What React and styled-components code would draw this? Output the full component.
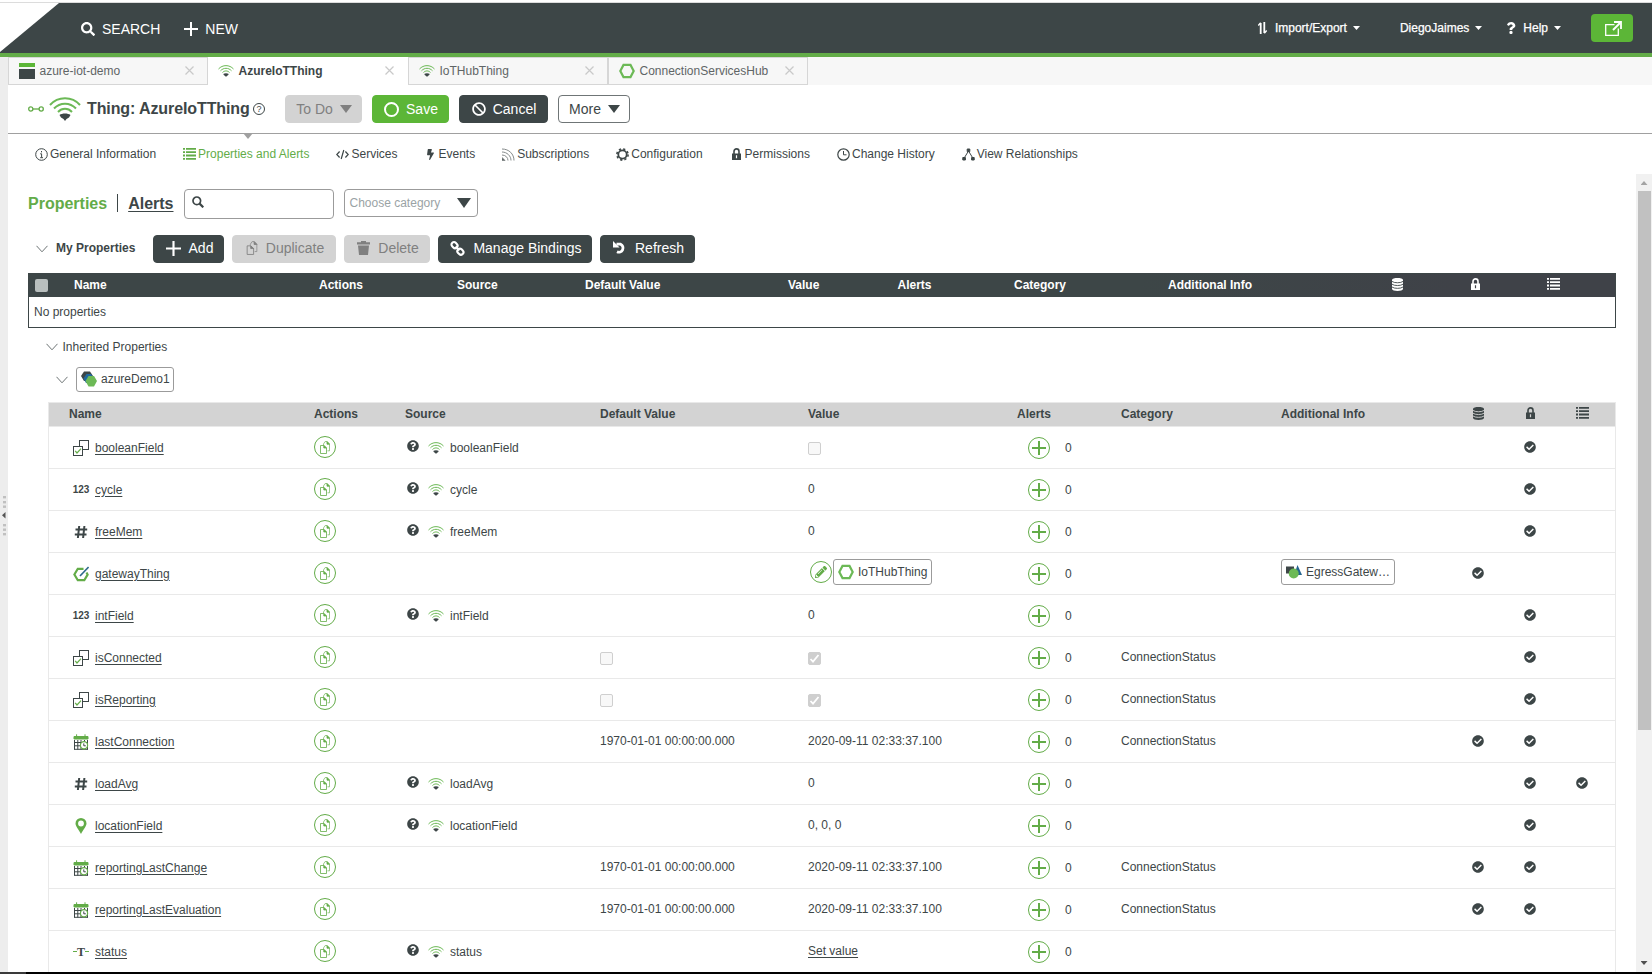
import styled, { createGlobalStyle } from 'styled-components';
import { FaBan, FaBolt, FaCheckCircle, FaPencilAlt, FaQuestion, FaQuestionCircle, FaSearch } from 'react-icons/fa';

const COLORS = {
  DARK: '#3d4647',
  GREEN: '#5cb637',
  GREEN_LINE: '#63ac48',
  ICON_GREEN: '#6cb956',
  GRAY: '#d3d3d3',
  GRAY_TEXT: '#808080',
  BORDER: '#9b9b9b',
  LINE: '#e9e9e9',
  WHITE: '#ffffff',
};

const WIFI_TABS = ['AzureIoTThing', 'IoTHubThing'];

const SUB_NAV = [
  { label: 'General Information', icon: 'info', space: 27 },
  { label: 'Properties and Alerts', icon: 'list', space: 27, active: true },
  { label: 'Services', icon: 'code', space: 28 },
  { label: 'Events', icon: 'bolt', space: 27 },
  { label: 'Subscriptions', icon: 'feed', space: 27 },
  { label: 'Configuration', icon: 'gear', space: 29 },
  { label: 'Permissions', icon: 'lock', space: 27 },
  { label: 'Change History', icon: 'clock', space: 27 },
  { label: 'View Relationships', icon: 'tree', space: 0 },
];

const ROWS = [
  { name: 'booleanField', type: 'bool', source: true, value: 'unchecked', readOnly: true },
  { name: 'cycle', type: 'int', source: true, value: '0', readOnly: true },
  { name: 'freeMem', type: 'number', source: true, value: '0', readOnly: true },
  { name: 'gatewayThing', type: 'thing', value: 'thing', info: 'EgressGatew…', persistent: true },
  { name: 'intField', type: 'int', source: true, value: '0', readOnly: true },
  { name: 'isConnected', type: 'bool', def: 'unchecked', value: 'checked', category: 'ConnectionStatus', readOnly: true },
  { name: 'isReporting', type: 'bool', def: 'unchecked', value: 'checked', category: 'ConnectionStatus', readOnly: true },
  { name: 'lastConnection', type: 'date', def: '1970-01-01 00:00:00.000', value: '2020-09-11 02:33:37.100', category: 'ConnectionStatus', persistent: true, readOnly: true },
  { name: 'loadAvg', type: 'number', source: true, value: '0', readOnly: true, logged: true },
  { name: 'locationField', type: 'location', source: true, value: '0, 0, 0', readOnly: true },
  { name: 'reportingLastChange', type: 'date', def: '1970-01-01 00:00:00.000', value: '2020-09-11 02:33:37.100', category: 'ConnectionStatus', persistent: true, readOnly: true },
  { name: 'reportingLastEvaluation', type: 'date', def: '1970-01-01 00:00:00.000', value: '2020-09-11 02:33:37.100', category: 'ConnectionStatus', persistent: true, readOnly: true },
  { name: 'status', type: 'string', source: true, value: 'Set value' },
];

/* icons */

const WifiIcon = ({ width = 16, height = 12 }) => (
  <svg width={width} height={height} viewBox="0 0 32 24" fill="none">
    <path d="M1 8C9 -1 23 -1 31 8" stroke={COLORS.ICON_GREEN} strokeWidth="2" />
    <path d="M5 11.5C11 5 21 5 27 11.5" stroke={COLORS.ICON_GREEN} strokeWidth="2" />
    <path d="M9 15C13 10.8 19 10.8 23 15" stroke={COLORS.ICON_GREEN} strokeWidth="2" />
    <path d="M10.5 18C13 16 19 16 21.5 18L20 20.5L17.5 22L16 24L14.5 22L12 20.5Z" fill={COLORS.DARK} />
  </svg>
);

const ConnectorIcon = () => (
  <svg width="16" height="8" viewBox="0 0 16 8" fill="none" stroke={COLORS.GREEN_LINE} strokeWidth="1.3">
    <circle cx="2.8" cy="4" r="2.1" />
    <circle cx="13.2" cy="4" r="2.1" />
    <path d="M5 4H11" />
  </svg>
);

const HexIcon = () => (
  <svg width="16" height="16" viewBox="0 0 16 16" fill="none">
    <path d="M4.5 1.9H11.5L14.7 8L11.5 14.1H4.5L1.3 8Z" stroke={COLORS.ICON_GREEN} strokeWidth="2.2" />
  </svg>
);

const ProjectIcon = () => (
  <svg width="16" height="16">
    <rect width="16" height="4" fill={COLORS.GREEN} />
    <rect y="6" width="16" height="10" fill={COLORS.DARK} />
  </svg>
);

const CloseIcon = () => (
  <svg width="9" height="9" viewBox="0 0 9 9" stroke="#c9c9c9" strokeWidth="1.2">
    <path d="M.5 .5L8.5 8.5M8.5 .5L.5 8.5" />
  </svg>
);

const PlusIcon = ({ size = 14 }) => (
  <svg width={size} height={size} viewBox="0 0 14 14" stroke="currentColor" strokeWidth="2">
    <path d="M7 0V14M0 7H14" />
  </svg>
);

const Triangle = ({ w = 12, h = 7 }) => (
  <svg width={w} height={h} viewBox="0 0 12 7" preserveAspectRatio="none" fill="currentColor">
    <path d="M0 0H12L6 7Z" />
  </svg>
);

const ChevronIcon = () => (
  <svg width="12" height="8" viewBox="0 0 12 8" fill="none" stroke="#6d7475">
    <path d="M.5 .8L6 6.8L11.5 .8" />
  </svg>
);

const MagnifierIcon = () => (
  <svg width="12" height="12" viewBox="0 0 12 12" fill="none" stroke={COLORS.DARK}>
    <circle cx="4.8" cy="4.8" r="3.8" strokeWidth="1.7" />
    <path d="M7.6 7.6L11.3 11.3" strokeWidth="2.2" />
  </svg>
);

const CopyIcon = ({ width = 10, height = 13 }) => (
  <svg width={width} height={height} viewBox="0 0 10 13" fill="none" stroke="currentColor" strokeWidth=".8">
    <path d="M.5 4.5H4L6.5 7V12.5H.5Z" />
    <path d="M3.5 4V3L5 .6H7.2L9.5 3V9.8H7.5" opacity=".8" />
    <path d="M3.8 4.5V7H6.5ZM7 .6V3.2H9.5Z" fill="currentColor" />
  </svg>
);

const TrashIcon = () => (
  <svg width="13" height="14" viewBox="0 0 13 14" fill="currentColor">
    <path d="M4 0H9V1.2H13V3.4H0V1.2H4ZM1 4.6H12L11 14H2Z" />
  </svg>
);

const ChainIcon = () => (
  <svg width="15" height="15" viewBox="0 0 15 15" fill="none" stroke="currentColor" strokeWidth="2.1">
    <rect x="1.3" y="1.6" width="6.4" height="5" rx="2.4" transform="rotate(45 4.5 4.1)" />
    <rect x="7.2" y="8.2" width="6.4" height="5" rx="2.4" transform="rotate(45 10.4 10.7)" />
    <path d="M5.6 5.6L9.4 9.4" />
  </svg>
);

const RefreshIcon = () => (
  <svg width="14" height="14" viewBox="0 0 14 14">
    <path d="M3.5 3.2H7.6A4.2 4.2 0 1 1 4 10.8" fill="none" stroke="currentColor" strokeWidth="2.8" />
    <path d="M0 0V6.4H6.6Z" fill="currentColor" />
  </svg>
);

const ListIcon = () => (
  <svg width="13" height="12" viewBox="0 0 13 12" fill="currentColor">
    {[0, 3.3, 6.6, 9.9].map((y) => (
      <path key={y} d={`M0 ${y}H2V${y + 1.8}H0ZM3 ${y}H13V${y + 1.8}H3Z`} />
    ))}
  </svg>
);

const DatabaseIcon = ({ stripe }) => (
  <svg width="11" height="13" viewBox="0 0 11 13">
    <path d="M0 2C0 -.6 11 -.6 11 2V11C11 13.6 0 13.6 0 11Z" fill="currentColor" />
    <path d="M0 3.4C2 5.2 9 5.2 11 3.4M0 6.2C2 8 9 8 11 6.2M0 9C2 10.8 9 10.8 11 9" fill="none" stroke={stripe} strokeWidth=".9" />
  </svg>
);

const LockIcon = () => (
  <svg width="9" height="12" viewBox="0 0 9 12">
    <path d="M2 6V3.4A2.5 2.5 0 0 1 7 3.4V6" fill="none" stroke="currentColor" strokeWidth="1.6" />
    <path d="M0 5.4H9V12H0ZM3.9 7.2V10.2H5.1V7.2Z" fill="currentColor" fillRule="evenodd" />
  </svg>
);

const ExportIcon = () => (
  <svg width="17" height="15" viewBox="0 0 17 15" fill="none" stroke="#fff">
    <path d="M9.5 3.6H.7V14.3H13.3V7.5" strokeWidth="1.3" />
    <path d="M8 9L15 2" strokeWidth="2" />
    <path d="M9 1H16V8" strokeWidth="1.8" />
  </svg>
);

const ArrowsIcon = () => (
  <svg width="9" height="12" viewBox="0 0 9 12" fill="none" stroke="#fff">
    <path d="M2.7 12V1M6.3 0V11" strokeWidth="1.8" />
    <path d="M.3 3.5L2.7 .8M8.7 8.5L6.3 11.2" strokeWidth="1.4" />
  </svg>
);

const NavIcon = ({ name }) => {
  if (name === 'list') return <ListIcon />;
  if (name === 'bolt') return <NavIconBox><FaBolt size={11} /></NavIconBox>;
  if (name === 'lock') return <NavIconBox><LockIcon /></NavIconBox>;
  return (
    <svg width="13" height="13" viewBox="0 0 13 13" fill="none" stroke={COLORS.DARK}>
      {name === 'info' && (
        <>
          <circle cx="6.5" cy="6.5" r="5.8" />
          <path d="M6.5 3V4.4M5.2 5.8H6.6V9.5M5.2 9.7H8" />
        </>
      )}
      {name === 'code' && <path d="M3.6 3.5L.8 6.5L3.6 9.5M9.4 3.5L12.2 6.5L9.4 9.5M7.8 2L5.2 11" strokeWidth="1.2" />}
      {name === 'feed' && (
        <g stroke="#858a8b">
          <path d="M0 1C7 1 12 6 12 12.5M0 4C5 4 9 8 9 12.5M0 7C3.5 7 6 9.5 6 12.5" />
          <path d="M0 9.5L3 12.5H0Z" fill={COLORS.DARK} />
        </g>
      )}
      {name === 'gear' && (
        <>
          <circle cx="6.5" cy="6.5" r="4.2" strokeWidth="1.8" />
          <circle cx="6.5" cy="6.5" r="5.6" strokeWidth="1.6" strokeDasharray="2.2 2.198" />
        </>
      )}
      {name === 'clock' && (
        <>
          <circle cx="6.5" cy="6.5" r="5.7" strokeWidth="1.2" />
          <path d="M6.5 3V6.8H9.5" />
        </>
      )}
      {name === 'tree' && (
        <g fill={COLORS.DARK}>
          <path d="M5.2 1H7.8V3.6H5.2ZM.8 9.5H3.4V12H.8ZM9.6 9.5H12.2V12H9.6Z" />
          <path d="M6.5 3L2.5 9.5M6.5 3L10.5 9.5" fill="none" />
        </g>
      )}
    </svg>
  );
};

const TypeIcon = ({ type }) => {
  if (type === 'int') return <IntLabel>123</IntLabel>;
  if (type === 'string') {
    return (
      <StringType>
        <StringDash />
        T
        <StringDash />
      </StringType>
    );
  }
  return (
    <svg width="16" height="16" viewBox="0 0 16 16" fill="none">
      {type === 'number' && (
        <path d="M6.2 2L4.9 14M11.4 2L10.1 14M2.5 5.5H14.2M1.8 10.5H13.5" stroke={COLORS.DARK} strokeWidth="2" />
      )}
      {type === 'bool' && (
        <>
          <rect x="6.5" y=".5" width="9" height="9" stroke={COLORS.DARK} />
          <rect x=".5" y="6.5" width="9" height="9" fill="#fff" stroke={COLORS.DARK} />
          <path d="M2.2 10.8L4 13L8 8.6" stroke={COLORS.GREEN_LINE} strokeWidth="1.2" />
        </>
      )}
      {type === 'thing' && (
        <>
          <path d="M10.5 2.8H4.8L1.4 8.5L4.8 14.2H11.3L14.6 8.6L13.5 6.5" stroke={COLORS.GREEN_LINE} strokeWidth="2.2" />
          <path d="M7 10L15.6 1" stroke="#2f6a8c" strokeWidth="1.7" />
        </>
      )}
      {type === 'date' && (
        <>
          <path d="M1 2.5H15V5H1ZM3.6 .3V3M12 .3V3" fill={COLORS.GREEN_LINE} stroke={COLORS.GREEN_LINE} />
          <path d="M1.5 6V15.5M4.8 6V15.5M8 6V15.5M11.5 6V8M14.5 6V15.5M1 8.5H15M1 11.8H15M1 15.3H15" stroke={COLORS.DARK} />
          <circle cx="11" cy="11.3" r="3.6" fill="#fff" stroke={COLORS.GREEN_LINE} strokeWidth="1.2" />
          <path d="M10.8 9.4V11.8H12.8" stroke={COLORS.DARK} />
        </>
      )}
      {type === 'location' && (
        <path
          d="M8 0A5.5 5.5 0 0 0 2.5 5.5C2.5 8 5.5 11.5 8 16C10.5 11.5 13.5 8 13.5 5.5A5.5 5.5 0 0 0 8 0ZM8 2.6A2.9 2.9 0 1 1 8 8.4A2.9 2.9 0 1 1 8 2.6Z"
          fill={COLORS.GREEN_LINE}
          fillRule="evenodd"
        />
      )}
    </svg>
  );
};

const TemplateIcon = () => (
  <svg width="16" height="16" viewBox="0 0 16 16">
    <path d="M3 .5H9L12 5L9 10H3L0 5Z" fill={COLORS.DARK} />
    <path d="M5.5 3H10L13 7.5L10 12H5L2.5 7.5Z" fill="#1f6aa0" />
    <path d="M7.5 5H13L16 10L13 15.5H7.5L4.5 10Z" fill={COLORS.ICON_GREEN} />
  </svg>
);

const ShapeIcon = () => (
  <svg width="16" height="14" viewBox="0 0 16 14">
    <rect y="1.5" width="8" height="7" fill={COLORS.DARK} />
    <path d="M11.5 0L16 10H8Z" fill="#24648f" />
    <circle cx="7.7" cy="8.5" r="5" fill={COLORS.ICON_GREEN} />
  </svg>
);

const HandleIcon = () => (
  <svg width="8" height="42" viewBox="0 0 8 42">
    {[1, 6, 10.5, 29, 33.5, 38].map((y) => (
      <rect key={y} x="3" y={y} width="3" height="2.4" fill="#c0c0c0" />
    ))}
    <path d="M5.5 17V23.5L2 20.2Z" fill="#555" />
  </svg>
);

/* sections */

const CellValue = ({ value }) => {
  if (value === 'checked' || value === 'unchecked') {
    return (
      <CheckBox $checked={value === 'checked'}>
        {value === 'checked' && (
          <svg width="11" height="11" viewBox="0 0 11 11" fill="none" stroke="#fff" strokeWidth="1.8">
            <path d="M1.5 6L4 8.6L9.5 2" />
          </svg>
        )}
      </CheckBox>
    );
  }
  if (value === 'thing') {
    return (
      <>
        <PencilCircle>
          <FaPencilAlt size={12} />
        </PencilCircle>
        <EntityTag $width={99}>
          <HexIcon />
          IoTHubThing
        </EntityTag>
      </>
    );
  }
  if (value === 'Set value') return <Link>{value}</Link>;
  return value || null;
};

const valueOffset = (value) => {
  if (!value || value.includes('checked')) return 0;
  return value === 'thing' ? 3 : 1;
};

const PropertyRow = ({ row }) => (
  <InheritedRow>
    <NameCell>
      <TypeBox>
        <TypeIcon type={row.type} />
      </TypeBox>
      <Link>{row.name}</Link>
    </NameCell>
    <Cell $raise={1}>
      <Circle>
        <CopyIcon />
      </Circle>
    </Cell>
    <SourceCell>
      {row.source && (
        <>
          <SourceHelp>
            <FaQuestionCircle size={12} />
          </SourceHelp>
          <WifiIcon />
          {row.name}
        </>
      )}
    </SourceCell>
    <Cell $raise={valueOffset(row.def)}>
      <CellValue value={row.def} />
    </Cell>
    <Cell $raise={valueOffset(row.value)}>
      <CellValue value={row.value} />
    </Cell>
    <AlertCell>
      <Circle>
        <PlusIcon />
      </Circle>
      0
    </AlertCell>
    <Cell $raise={1}>{row.category}</Cell>
    <Cell $raise={3}>
      {row.info && (
        <EntityTag $width={114}>
          <ShapeIcon />
          {row.info}
        </EntityTag>
      )}
    </Cell>
    <FlagCell>{row.persistent && <FaCheckCircle size={12} />}</FlagCell>
    <FlagCell>{row.readOnly && <FaCheckCircle size={12} />}</FlagCell>
    <FlagCell>{row.logged && <FaCheckCircle size={12} />}</FlagCell>
  </InheritedRow>
);

const FlagHeads = ({ stripe }) => (
  <>
    <FlagCell>
      <DatabaseIcon stripe={stripe} />
    </FlagCell>
    <FlagCell>
      <LockIcon />
    </FlagCell>
    <FlagCell>
      <ListIcon />
    </FlagCell>
  </>
);

const TopBar = () => (
  <Header>
    <HeaderCorner />
    <HeaderLeft>
      <FaSearch size={14} />
      <HeaderAction $space={24}>SEARCH</HeaderAction>
      <PlusIcon />
      <HeaderAction>NEW</HeaderAction>
    </HeaderLeft>
    <HeaderRight>
      <HeaderMenu $space={40}>
        <ArrowsIcon />
        <MenuLabel>Import/Export</MenuLabel>
        <Triangle w={7} h={4} />
      </HeaderMenu>
      <HeaderMenu $space={23}>
        DiegoJaimes
        <Triangle w={7} h={4} />
      </HeaderMenu>
      <HeaderMenu $space={30}>
        <FaQuestion size={12} />
        Help
        <Triangle w={7} h={4} />
      </HeaderMenu>
      <ExportButton>
        <ExportIcon />
      </ExportButton>
    </HeaderRight>
  </Header>
);

const App = () => (
  <Page>
    <GlobalStyle />
    <TopBar />
    <Body>
      <SideHandle>
        <HandleIcon />
      </SideHandle>
      <Main>
        <TabBar>
          <Tab>
            <ProjectIcon />
            <TabLabel>azure-iot-demo</TabLabel>
            <CloseIcon />
          </Tab>
          {WIFI_TABS.map((tab, i) => (
            <Tab key={tab} $active={i === 0}>
              <WifiIcon />
              <TabLabel>{tab}</TabLabel>
              <CloseIcon />
            </Tab>
          ))}
          <Tab>
            <HexIcon />
            <TabLabel>ConnectionServicesHub</TabLabel>
            <CloseIcon />
          </Tab>
        </TabBar>
        <TitleBar>
          <ConnectorIcon />
          <TitleIcon>
            <WifiIcon width={32} height={24} />
          </TitleIcon>
          <Title>Thing: AzureIoTThing</Title>
          <HelpCircle>?</HelpCircle>
          <TitleButtons>
            <Button $kind="disabled" $width={77}>
              To Do
              <Triangle h={8} />
            </Button>
            <Button $kind="green" $width={77}>
              <Ring />
              Save
            </Button>
            <Button $width={89}>
              <FaBan size={14} />
              Cancel
            </Button>
            <Button $kind="outline" $width={72}>
              More
              <Triangle h={8} />
            </Button>
          </TitleButtons>
          <Pointer />
        </TitleBar>
        <SubNav>
          {SUB_NAV.map((item) => (
            <SubNavItem key={item.label} $active={item.active} $space={item.space}>
              <NavIcon name={item.icon} />
              {item.label}
            </SubNavItem>
          ))}
        </SubNav>
        <ScrollArea>
          <Content>
            <FilterRow>
              <Heading $active>Properties</Heading>
              <Divider />
              <Heading>Alerts</Heading>
              <SearchBox>
                <MagnifierIcon />
              </SearchBox>
              <Select>
                Choose category
                <Triangle w={14} h={10} />
              </Select>
            </FilterRow>
            <ActionRow>
              <ChevronIcon />
              <SectionName>My Properties</SectionName>
              <Button $width={71}>
                <PlusIcon size={15} />
                Add
              </Button>
              <Button $kind="disabled" $width={104}>
                <CopyIcon width={12} height={14} />
                Duplicate
              </Button>
              <Button $kind="disabled" $width={86}>
                <TrashIcon />
                Delete
              </Button>
              <Button $width={154}>
                <ChainIcon />
                Manage Bindings
              </Button>
              <Button $width={95}>
                <RefreshIcon />
                Refresh
              </Button>
            </ActionRow>
            <OwnTable>
              <OwnHead>
                <HeadCheck />
                <span>Name</span>
                <span>Actions</span>
                <span>Source</span>
                <span>Default Value</span>
                <span>Value</span>
                <span>Alerts</span>
                <span>Category</span>
                <span>Additional Info</span>
                <FlagHeads stripe={COLORS.DARK} />
              </OwnHead>
              <EmptyRow>No properties</EmptyRow>
            </OwnTable>
            <InheritedTitle>
              <ChevronIcon />
              Inherited Properties
            </InheritedTitle>
            <TemplateRow>
              <ChevronIcon />
              <TemplateTag $width={98}>
                <TemplateIcon />
                azureDemo1
              </TemplateTag>
            </TemplateRow>
            <InheritedTable>
              <InheritedHead>
                <HeadName>Name</HeadName>
                <span>Actions</span>
                <span>Source</span>
                <span>Default Value</span>
                <span>Value</span>
                <span>Alerts</span>
                <span>Category</span>
                <span>Additional Info</span>
                <FlagHeads stripe={COLORS.GRAY} />
              </InheritedHead>
              {ROWS.map((row) => (
                <PropertyRow key={row.name} row={row} />
              ))}
            </InheritedTable>
          </Content>
          <ScrollBar>
            <ScrollArrow $up />
            <ScrollThumb />
            <ScrollArrow />
          </ScrollBar>
        </ScrollArea>
      </Main>
    </Body>
    <BottomEdge />
  </Page>
);

export default App;

const GlobalStyle = createGlobalStyle`
  * {
    box-sizing: border-box;
  }

  body {
    margin: 0;
    overflow: hidden;
    background: ${COLORS.WHITE};
  }

  svg {
    display: block;
    flex-shrink: 0;
  }
`;

const Page = styled.div`
  display: flex;
  flex-direction: column;
  width: 1652px;
  height: 974px;
  overflow: hidden;

  color: ${COLORS.DARK};
  font-family: 'Liberation Sans', Arial, sans-serif;
  font-size: 12px;
  line-height: 14px;
  white-space: nowrap;
`;

const Header = styled.header`
  display: flex;
  flex-shrink: 0;
  height: 57px;
  padding-top: 1px;
  border-top: 2px solid ${COLORS.WHITE};
  border-bottom: 4px solid ${COLORS.GREEN_LINE};
  background: linear-gradient(#dcdcdc 1px, ${COLORS.DARK} 1px);
  color: ${COLORS.WHITE};
`;

const HeaderCorner = styled.div`
  width: 59px;
  height: 49px;
  background: ${COLORS.WHITE};
  clip-path: polygon(0 0, 100% 0, 0 100%);
`;

const HeaderLeft = styled.div`
  display: flex;
  flex: 1;
  align-items: center;
  height: 52px;
  padding-left: 22px;
`;

const HeaderAction = styled.span`
  margin: 0 ${({ $space = 0 }) => $space}px 0 7px;
  font-size: 14px;
  line-height: 16px;
`;

const HeaderRight = styled.div`
  display: flex;
  align-items: center;
  height: 50px;
  padding-right: 19px;
`;

const HeaderMenu = styled.div`
  display: flex;
  align-items: center;
  gap: 6px;
  margin-right: ${({ $space }) => $space}px;
  -webkit-text-stroke: 0.25px;
`;

const MenuLabel = styled.span`
  padding-left: 2px;
`;

const ExportButton = styled.div`
  display: flex;
  align-items: center;
  justify-content: center;
  width: 42px;
  height: 28px;
  padding-left: 2px;
  border-radius: 4px;
  background: ${COLORS.GREEN};
`;

const Body = styled.div`
  display: flex;
  flex: 1;
  min-height: 0;
`;

const SideHandle = styled.div`
  width: 8px;
  padding-top: 438px;
  background: #ededed;
`;

const Main = styled.main`
  display: flex;
  flex: 1;
  flex-direction: column;
  min-width: 0;
`;

const TabBar = styled.div`
  display: flex;
  flex-shrink: 0;
  height: 28px;
  background: #f7f7f7;
`;

const Tab = styled.div`
  display: flex;
  align-items: center;
  width: 200px;
  padding: 0 13px 1px ${({ $active }) => ($active ? 9 : 10)}px;
  border: 1px solid ${({ $active }) => ($active ? COLORS.WHITE : '#d6d6d6')};
  background: ${({ $active }) => ($active ? COLORS.WHITE : '#f7f7f7')};
  color: ${({ $active }) => ($active ? COLORS.DARK : '#5f6566')};
  font-weight: ${({ $active }) => ($active ? 700 : 400)};
`;

const TabLabel = styled.span`
  flex: 1;
  padding-left: 4.5px;
`;

const TitleBar = styled.div`
  position: relative;
  display: flex;
  flex-shrink: 0;
  align-items: center;
  height: 49px;
  padding-left: 20px;
  border-bottom: 1px solid #a0a0a0;
`;

const TitleIcon = styled.div`
  margin: 0 6px 0 5px;
`;

const Title = styled.h1`
  width: 166px;
  margin: 0;
  font-size: 16px;
  line-height: 18px;
  letter-spacing: -0.1px;
`;

const HelpCircle = styled.div`
  width: 12px;
  height: 12px;
  border: 1px solid ${COLORS.DARK};
  border-radius: 50%;
  font-size: 9px;
  line-height: 10px;
  text-align: center;
`;

const TitleButtons = styled.div`
  display: flex;
  gap: 10px;
  margin-left: 20px;
`;

const Pointer = styled.div`
  position: absolute;
  top: 48px;
  left: 235px;
  width: 10px;
  height: 6px;
  background: #a0a0a0;
  clip-path: polygon(0 0, 100% 0, 50% 100%);
`;

const buttonColors = {
  dark: { background: COLORS.DARK, text: COLORS.WHITE, border: COLORS.DARK },
  green: { background: COLORS.GREEN, text: COLORS.WHITE, border: COLORS.GREEN },
  disabled: { background: COLORS.GRAY, text: COLORS.GRAY_TEXT, border: COLORS.GRAY },
  outline: { background: COLORS.WHITE, text: COLORS.DARK, border: '#6f7576' },
};

const Button = styled.div`
  display: flex;
  flex-shrink: 0;
  align-items: center;
  justify-content: center;
  gap: 7px;
  width: ${({ $width }) => $width}px;
  height: 28px;
  padding-left: 1px;
  border: 1px solid ${({ $kind = 'dark' }) => buttonColors[$kind].border};
  border-radius: 4px;
  background: ${({ $kind = 'dark' }) => buttonColors[$kind].background};
  color: ${({ $kind = 'dark' }) => buttonColors[$kind].text};
  font-size: 14px;
  line-height: 16px;
`;

const Ring = styled.i`
  width: 15px;
  height: 15px;
  border: 2.5px solid ${COLORS.WHITE};
  border-radius: 50%;
`;

const SubNav = styled.nav`
  display: flex;
  flex-shrink: 0;
  align-items: center;
  height: 40px;
  padding-left: 27px;
`;

const SubNavItem = styled.div`
  display: flex;
  align-items: center;
  gap: 2px;
  margin-right: ${({ $space }) => $space}px;
  color: ${({ $active }) => ($active ? COLORS.GREEN_LINE : COLORS.DARK)};
`;

const NavIconBox = styled.span`
  display: flex;
  width: 11px;
`;

const ScrollArea = styled.div`
  display: flex;
  flex: 1;
  min-height: 0;
`;

const Content = styled.div`
  flex: 1;
  padding: 15px 20px 0;
  overflow: hidden;
`;

const FilterRow = styled.div`
  display: flex;
  align-items: flex-start;
  height: 46px;
`;

const Heading = styled.h2`
  margin: 6px 0 0;
  color: ${({ $active }) => ($active ? COLORS.GREEN_LINE : COLORS.DARK)};
  font-size: 16px;
  line-height: 18px;
  text-decoration: ${({ $active }) => ($active ? 'none' : 'underline')};
  text-underline-offset: 2px;
`;

const Divider = styled.div`
  width: 1px;
  height: 18px;
  margin: 5px 10px 0 10px;
  background: ${COLORS.DARK};
`;

const SearchBox = styled.div`
  width: 150px;
  height: 30px;
  margin: 0 10px;
  padding: 6px 7px;
  border: 1px solid ${COLORS.BORDER};
  border-radius: 4px;
`;

const Select = styled.div`
  display: flex;
  align-items: center;
  justify-content: space-between;
  width: 134px;
  height: 28px;
  padding: 0 6px 0 5px;
  border: 1px solid ${COLORS.BORDER};
  border-radius: 4px;
  color: #9aa3a5;

  svg {
    color: ${COLORS.DARK};
  }
`;

const ActionRow = styled.div`
  display: flex;
  align-items: center;
  gap: 8px;
  height: 28px;
  margin-bottom: 10px;
  padding-left: 8px;

  ${Button} {
    gap: 8px;
    padding: 0 0 2px 2px;
  }
`;

const SectionName = styled.strong`
  width: 89px;
  padding-bottom: 2px;
`;

const OwnTable = styled.div`
  height: 55px;
  border: 1px solid ${COLORS.DARK};
`;

const OwnHead = styled.div`
  display: grid;
  grid-template-columns: 45px 245px 138px 128px 203px 109.5px 116.5px 154px 190px 78px 78px 79px;
  align-items: center;
  height: 23px;
  padding-bottom: 2px;
  background: linear-gradient(90deg, ${COLORS.DARK} 70%, #3f4248 90%);
  color: ${COLORS.WHITE};
  font-weight: 700;
`;

const HeadCheck = styled.div`
  width: 13px;
  height: 13px;
  margin: 2px 0 0 6px;
  border-radius: 2px;
  background: #b9bfbe;
`;

const EmptyRow = styled.div`
  padding: 8px 5px;
`;

const InheritedTitle = styled.div`
  display: flex;
  align-items: center;
  gap: 5px;
  height: 39px;
  padding: 0 0 2px 17.5px;
`;

const TemplateRow = styled.div`
  display: flex;
  align-items: center;
  gap: 8px;
  height: 25px;
  margin-bottom: 10px;
  padding-left: 28px;
`;

const EntityTag = styled.div`
  display: flex;
  align-items: center;
  gap: 4px;
  width: ${({ $width }) => $width}px;
  height: 26px;
  padding: 0 6px 0 4px;
  border: 1px solid ${COLORS.BORDER};
  border-radius: 3px;
`;

const TemplateTag = styled(EntityTag)`
  height: 25px;
  padding-bottom: 1px;
`;

const InheritedTable = styled.div`
  margin-left: 20px;
  border: 1px solid ${COLORS.LINE};
  border-bottom: 0;
`;

const InheritedGrid = styled.div`
  display: grid;
  grid-template-columns: 265px 91px 195px 208px 209px 104px 160px 171px 52px 52px 52px;
  align-items: center;
  border-bottom: 1px solid ${COLORS.LINE};
`;

const InheritedHead = styled(InheritedGrid)`
  height: 24px;
  padding-bottom: 2px;
  background: ${COLORS.GRAY};
  font-weight: 700;
`;

const HeadName = styled.span`
  padding-left: 20px;
`;

const InheritedRow = styled(InheritedGrid)`
  height: 42px;
`;

const Cell = styled.div`
  display: flex;
  align-items: center;
  height: 41px;
  padding-bottom: ${({ $raise = 0 }) => $raise}px;
`;

const NameCell = styled(Cell)`
  gap: 6px;
  padding: 0 0 0 24px;
`;

const TypeBox = styled.div`
  display: flex;
  justify-content: center;
  width: 16px;
`;

const IntLabel = styled.span`
  font-size: 10px;
  font-weight: 700;
`;

const StringType = styled.span`
  display: flex;
  align-items: center;
  font-family: 'Liberation Serif', serif;
  font-size: 12px;
  font-weight: 700;
`;

const StringDash = styled.i`
  width: 4px;
  height: 1px;
  background: ${COLORS.GREEN_LINE};
`;

const Link = styled.span`
  text-decoration: underline;
  text-underline-offset: 2px;
`;

const SourceCell = styled(Cell)`
  gap: 6px;
  padding-left: 2px;
`;

const SourceHelp = styled.span`
  margin: 0 3px 3px 0;
`;

const AlertCell = styled(Cell)`
  gap: 15px;
  padding-left: 11px;
`;

const FlagCell = styled.div`
  display: flex;
  justify-content: center;
  padding-bottom: 1px;
`;

const Circle = styled.div`
  display: flex;
  flex-shrink: 0;
  align-items: center;
  justify-content: center;
  width: 22px;
  height: 22px;
  border: 1px solid ${COLORS.GREEN_LINE};
  border-radius: 50%;
  color: ${COLORS.GREEN_LINE};
`;

const PencilCircle = styled(Circle)`
  margin: 0 1px 0 2px;
`;

const CheckBox = styled.div`
  width: 13px;
  height: 13px;
  margin-top: 2px;
  border: 1px solid #cfcfcf;
  border-radius: 2px;
  background: ${({ $checked }) => ($checked ? '#cfcfcf' : '#f8f8f8')};
`;

const ScrollBar = styled.div`
  display: flex;
  flex-direction: column;
  align-items: center;
  width: 16px;
  background: #f1f1f1;
`;

const ScrollArrow = styled.i`
  width: 7px;
  height: 4px;
  margin: ${({ $up }) => ($up ? '7px 0 6px' : 'auto 0 7px')};
  background: ${({ $up }) => ($up ? '#a3a3a3' : '#505050')};
  clip-path: ${({ $up }) => ($up ? 'polygon(50% 0, 100% 100%, 0 100%)' : 'polygon(0 0, 100% 0, 50% 100%)')};
`;

const ScrollThumb = styled.div`
  width: 13px;
  height: 539px;
  background: #c1c1c1;
`;

const BottomEdge = styled.div`
  flex-shrink: 0;
  height: 2px;
  background: linear-gradient(90deg, #3a3a3a 26px, #000 26px);
`;
